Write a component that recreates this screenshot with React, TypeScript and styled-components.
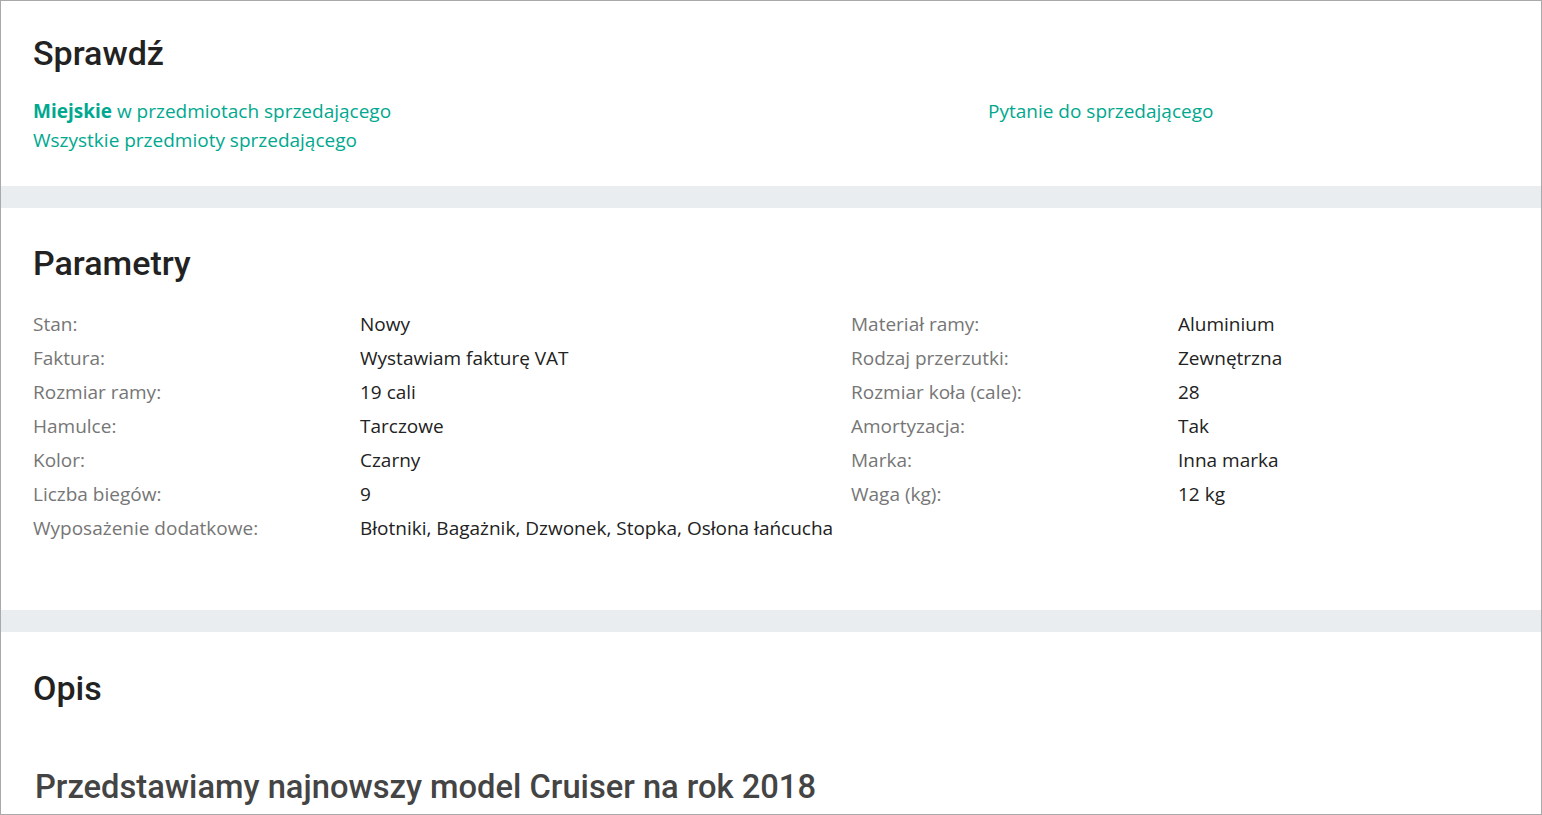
import React from 'react';
import styled, { createGlobalStyle } from 'styled-components';

const GlobalStyle = createGlobalStyle`
  html, body {
    margin: 0;
    padding: 0;
    background: #ffffff;
  }
  body {
    font-family: "Open Sans", "Liberation Sans", sans-serif;
  }
  * {
    box-sizing: border-box;
  }
`;

const Frame = styled.div`
  width: 1542px;
  height: 815px;
  border: 1px solid #a9a9a9;
  overflow: hidden;
  background: #ffffff;
`;

const Section = styled.section<{ $top: number; $bottom: number }>`
  padding: ${({ $top }) => $top}px 32px ${({ $bottom }) => $bottom}px;
  background: #ffffff;
`;

const Band = styled.div`
  height: 22px;
  background: #eaedf0;
`;

const Heading = styled.h2`
  margin: 0;
  font-family: Roboto, "Liberation Sans", sans-serif;
  font-weight: 500;
  font-size: 34px;
  line-height: 40px;
  color: #222222;
`;

const LinksGrid = styled.div`
  display: grid;
  grid-template-columns: 955px 1fr;
  margin-top: 24px;
`;

const LinkList = styled.div`
  display: flex;
  flex-direction: column;
`;

const Link = styled.a`
  font-size: 19px;
  line-height: 29px;
  color: #00a88f;
  text-decoration: none;
  cursor: pointer;

  b {
    font-weight: 700;
  }
`;

const ParamGrid = styled.div`
  display: grid;
  grid-template-columns: 327px 491px 327px 1fr;
  grid-auto-rows: 34px;
  margin-top: 24px;
  align-items: center;
`;

const Label = styled.div`
  font-size: 19px;
  color: #767676;
  white-space: nowrap;
`;

const Value = styled.div`
  font-size: 19px;
  color: #222222;
  white-space: nowrap;
`;

const SubHeading = styled.h3`
  margin: 59px 0 0;
  font-family: Roboto, "Liberation Sans", sans-serif;
  font-weight: 500;
  font-size: 32.7px;
  line-height: 40px;
  color: #444444;
  padding-left: 2px;
`;

type Param = [string, string];

const params: Param[] = [
  ['Stan:', 'Nowy'],
  ['Materiał ramy:', 'Aluminium'],
  ['Faktura:', 'Wystawiam fakturę VAT'],
  ['Rodzaj przerzutki:', 'Zewnętrzna'],
  ['Rozmiar ramy:', '19 cali'],
  ['Rozmiar koła (cale):', '28'],
  ['Hamulce:', 'Tarczowe'],
  ['Amortyzacja:', 'Tak'],
  ['Kolor:', 'Czarny'],
  ['Marka:', 'Inna marka'],
  ['Liczba biegów:', '9'],
  ['Waga (kg):', '12 kg'],
  ['Wyposażenie dodatkowe:', 'Błotniki, Bagażnik, Dzwonek, Stopka, Osłona łańcucha'],
];

export default function App() {
  return (
    <>
      <GlobalStyle />
      <Frame>
        <Section $top={32} $bottom={31}>
          <Heading>Sprawdź</Heading>
          <LinksGrid>
            <LinkList>
              <Link>
                <b>Miejskie</b> w przedmiotach sprzedającego
              </Link>
              <Link>Wszystkie przedmioty sprzedającego</Link>
            </LinkList>
            <LinkList>
              <Link>Pytanie do sprzedającego</Link>
            </LinkList>
          </LinksGrid>
        </Section>
        <Band />
        <Section $top={35} $bottom={65}>
          <Heading>Parametry</Heading>
          <ParamGrid>
            {params.map(([label, value]) => (
              <React.Fragment key={label}>
                <Label>{label}</Label>
                <Value>{value}</Value>
              </React.Fragment>
            ))}
          </ParamGrid>
        </Section>
        <Band />
        <Section $top={36} $bottom={0}>
          <Heading>Opis</Heading>
          <SubHeading>Przedstawiamy najnowszy model Cruiser na rok 2018</SubHeading>
        </Section>
      </Frame>
    </>
  );
}
